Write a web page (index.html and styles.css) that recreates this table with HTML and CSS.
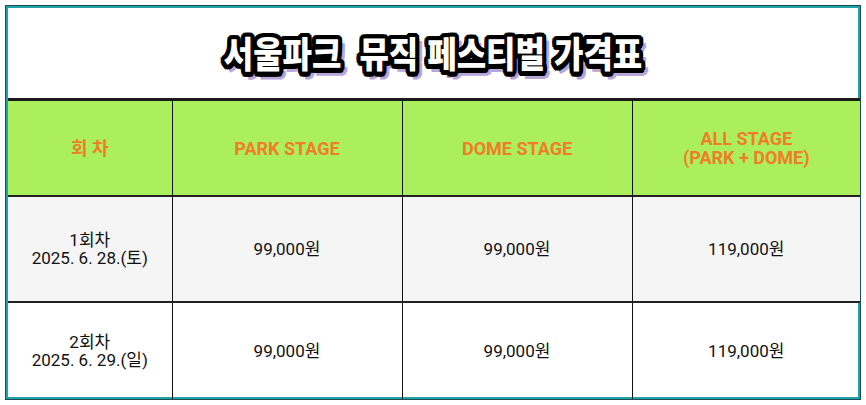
FILE: index.html
```html
<!DOCTYPE html>
<html lang="ko">
<head>
<meta charset="utf-8">
<link rel="stylesheet" href="styles.css">
</head>
<body>
<div class="frame">
  <div class="title-box">
    <h1 class="title">서울파크&nbsp; 뮤직 페스티벌 가격표</h1>
  </div>
  <table class="price">
    <colgroup>
      <col class="c1"><col class="c2"><col class="c3"><col class="c4">
    </colgroup>
    <thead>
      <tr>
        <th>회 차</th>
        <th>PARK STAGE</th>
        <th>DOME STAGE</th>
        <th>ALL STAGE<br>(PARK + DOME)</th>
      </tr>
    </thead>
    <tbody>
      <tr class="alt">
        <td><span class="line">1회차</span><span class="line">2025. 6. 28.(토)</span></td>
        <td>99,000원</td>
        <td>99,000원</td>
        <td>119,000원</td>
      </tr>
      <tr>
        <td><span class="line">2회차</span><span class="line">2025. 6. 29.(일)</span></td>
        <td>99,000원</td>
        <td>99,000원</td>
        <td>119,000원</td>
      </tr>
    </tbody>
  </table>
</div>
</body>
</html>
```

FILE: styles.css
```css
html, body {
  margin: 0;
  padding: 0;
  background: #ffffff;
}
body {
  padding: 5px 5px 0 5px;
  font-family: Roboto, "Noto Sans CJK KR", sans-serif;
}
.frame {
  width: 850px;
  height: 389px;
  border: 1px solid #1d4d50;
  box-shadow: inset 0 0 0 2px #1fa3a8;
  padding: 2px;
  box-sizing: content-box;
  overflow: hidden;
}
.title-box {
  height: 90px;
  display: flex;
  align-items: center;
  justify-content: center;
  background: #fff;
}
.title {
  margin: 0;
  font-family: "Noto Sans CJK KR", sans-serif;
  font-weight: 900;
  font-size: 32px;
  line-height: 36px;
  letter-spacing: 0px;
  color: #ffffff;
  text-shadow:
    -3px -3px 0 #000, 0 -3px 0 #000, 3px -3px 0 #000,
    -3px 0 0 #000, 3px 0 0 #000,
    -3px 3px 0 #000, 0 3px 0 #000, 3px 3px 0 #000,
    -2px -4px 0 #000, 2px -4px 0 #000, -4px -2px 0 #000, 4px -2px 0 #000,
    -4px 2px 0 #000, 4px 2px 0 #000, -2px 4px 0 #000, 2px 4px 0 #000,
    0 -4px 0 #000, 0 4px 0 #000, -4px 0 0 #000, 4px 0 0 #000,
    5px 6px 0 #b9a6d9, 6px 5px 0 #b9a6d9, 3px 7px 0 #b9a6d9, 7px 3px 0 #b9a6d9;
  transform: scaleY(1.15);
  position: relative;
  top: -1px;
}
.price {
  width: 852px;
  border-collapse: collapse;
  table-layout: fixed;
  border-top: 3px solid #1a1a1a;
}
.c1 { width: 164px; }
.c2 { width: 230px; }
.c3 { width: 230px; }
.c4 { width: 228px; }
.price th, .price td {
  border-left: 1px solid #111;
  text-align: center;
  vertical-align: middle;
  padding: 0;
}
.price tr > :first-child { border-left: none; }
.price th {
  height: 94px;
  background: #acef5c;
  color: #f07d2a;
  font-size: 18px;
  font-weight: 700;
  line-height: 19px;
  border-bottom: 2px solid #222;
}
.price td {
  font-size: 17px;
  color: #111;
  line-height: 18px;
}
.line {
  display: block;
  line-height: 18px;
  height: 18px;
  overflow: visible;
}
.price tbody tr.alt td {
  height: 104px;
  background: #f5f5f5;
  border-bottom: 2px solid #222;
}
.price tbody tr td {
  height: 96px;
}
```
